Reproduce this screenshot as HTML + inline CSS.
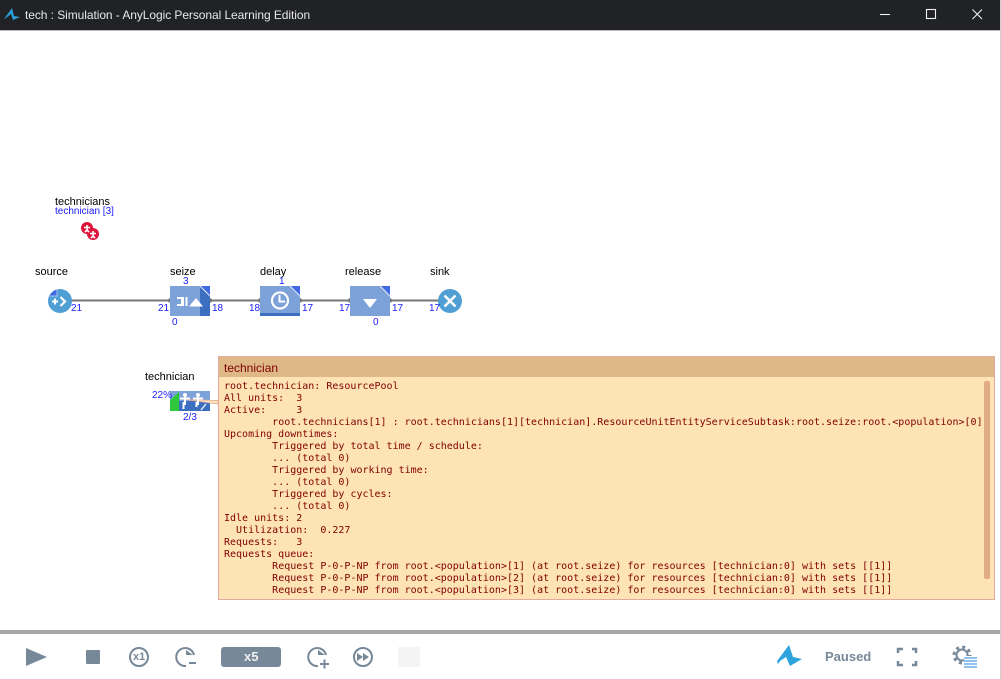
<!DOCTYPE html>
<html><head><meta charset="utf-8">
<style>
html,body{margin:0;padding:0;width:1001px;height:679px;overflow:hidden;background:#fff}
.t{position:absolute;font:10px/12px "Liberation Sans",sans-serif;white-space:pre}
.k{color:#000;font-size:11px}
.b{color:#1a1aff}
#title{position:absolute;left:0;top:0;width:1001px;height:30px;background:#202225;border-bottom:1px solid #bbb}
#tt{position:absolute;left:25px;top:7px;color:#e8e8e8;font:12px/16px "Liberation Sans",sans-serif;letter-spacing:-.07px;white-space:pre}
#pop{position:absolute;left:218px;top:356px;width:775px;height:242px;background:#fee3b5;border:1px solid #e2aaa0}
#ph{position:absolute;left:0;top:0;width:775px;height:20px;background:#deb887;color:#800000;font:12px/22px "Liberation Sans",sans-serif;padding-left:5px;box-sizing:border-box}
#pt{position:absolute;left:5px;top:24px;margin:0;color:#800000;font:10px/12px "DejaVu Sans Mono","Liberation Mono",monospace;white-space:pre;tab-size:8}
#sb{position:absolute;left:765px;top:24px;width:6px;height:198px;background:#e0ab86;border-radius:2px}
#bar{position:absolute;left:0;top:630px;width:1001px;height:4px;background:#a6a6a6}
#edge{position:absolute;left:1000px;top:0;width:1px;height:679px;background:#d0d0d0}
</style></head>
<body>
<div id="title">
<svg style="position:absolute;left:0;top:0" width="26" height="30"><path d="M4 19L12 8L14 16L20 17L13 20L11 14L6 18Z" fill="#2b9fd8"/></svg>
<div id="tt">tech : Simulation - AnyLogic Personal Learning Edition</div>
<svg style="position:absolute;left:870px;top:0" width="131" height="30" fill="none" stroke="#f0f0f0" stroke-width="1.1"><path d="M10 14.5H20"/><rect x="56.5" y="9.500" width="9" height="9"/><path d="M102.500 9.500L112 19M112 9.500L102.500 19"/></svg>
</div>

<svg style="position:absolute;left:0;top:0" width="1001" height="679">
<g stroke="#777" stroke-width="2"><path d="M70 300.5H170M210 300.5H260M300 300.5H350M390 300.5H440"/></g>
<g fill="#777"><circle cx="70" cy="300.5" r="2.2"/><circle cx="170" cy="300.5" r="2.2"/><circle cx="210" cy="300.5" r="2.2"/><circle cx="260" cy="300.5" r="2.2"/><circle cx="300" cy="300.5" r="2.2"/><circle cx="350" cy="300.5" r="2.2"/><circle cx="390" cy="300.5" r="2.2"/><circle cx="440" cy="300.5" r="2.2"/></g>
<g><circle cx="87" cy="228" r="6" fill="#dc143c"/><circle cx="93" cy="234" r="6" fill="#dc143c"/>
<g stroke="#fff" stroke-width="1.6" fill="none"><path d="M84 227.500H90M87 225V230M85 232L87 230L89 232"/><path d="M90 233.500H96M93 231V236M91 238L93 236L95 238"/></g></g>
<circle cx="60" cy="301" r="12" fill="#4f9fd5"/>
<path d="M57 289.500V296H49.500A12 12 0 0 1 57 289.500Z" fill="#4169e1"/>
<path d="M57 289.500V296H49.500" fill="none" stroke="#a8c4ee" stroke-width="1"/>
<g stroke="#fff" fill="none" stroke-width="2"><path d="M52 301.500H58M55 298.500V304.500"/><path d="M60.500 297L65 301.500L60.500 306" stroke-width="2.200"/></g>
<rect x="170" y="286" width="40" height="30" fill="#7da1d9"/>
<rect x="200" y="286" width="10" height="30" fill="#3c6fbf"/>
<path d="M200 286H210V296Z" fill="#4169e1"/><path d="M200 286L210 296" stroke="#e8effa" stroke-width="1"/>
<path d="M177 297H184V306H177V304H181V299H177ZM185.500 297H187.500V306H185.500Z" fill="#fff"/>
<path d="M189 306.500L196 298L203 306.500Z" fill="#fff"/>
<rect x="260" y="286" width="40" height="30" fill="#7da1d9"/>
<rect x="260" y="313" width="40" height="3" fill="#3c6fbf"/>
<path d="M290 286H300V296Z" fill="#4169e1"/><path d="M290 286L300 296" stroke="#e8effa" stroke-width="1"/>
<circle cx="280" cy="300.500" r="8" fill="none" stroke="#fff" stroke-width="2.200"/>
<path d="M279.500 295V301.500H285" fill="none" stroke="#fff" stroke-width="2"/>
<rect x="350" y="286" width="40" height="30" fill="#7da1d9"/>
<path d="M380 286H390V296Z" fill="#4169e1"/><path d="M380 286L390 296" stroke="#e8effa" stroke-width="1"/>
<path d="M363 299H377L370 308Z" fill="#fff"/>
<circle cx="450" cy="301" r="12" fill="#4f9fd5"/>
<path d="M444.500 295.500L455.500 306.500M455.500 295.500L444.500 306.500" stroke="#fff" stroke-width="2.500"/>
<rect x="170" y="391" width="40" height="20" fill="#7da1d9"/>
<rect x="179" y="401" width="31" height="10" fill="#3c6fbf"/>
<path d="M170 411V400L179 392V411Z" fill="#2ec83c"/>
<path d="M185 399.500L218 404V400.500Z" fill="#fee3b5" stroke="#e2aaa0" stroke-width=".8"/>
<g stroke="#fff" fill="none" stroke-width="2"><circle cx="185" cy="395" r="2" fill="#fff" stroke="none"/><circle cx="198" cy="395" r="2" fill="#fff" stroke="none"/><path d="M180 398.500H190M185 397V405M183.500 409V402M193 398.500H203M198 397V405M196.500 407V402"/><path d="M201 410L206 404" stroke-width="1.200"/></g>
</svg>

<div class="t k" style="left:55px;top:196px">technicians</div>
<div class="t b" style="left:55px;top:206px">technician [3]</div>
<div class="t k" style="left:35px;top:266px">source</div>
<div class="t k" style="left:170px;top:266px">seize</div>
<div class="t k" style="left:260px;top:266px">delay</div>
<div class="t k" style="left:345px;top:266px">release</div>
<div class="t k" style="left:430px;top:266px">sink</div>
<div class="t k" style="left:145px;top:371px">technician</div>

<div class="t b" style="left:71px;top:303px">21</div>
<div class="t b" style="left:158px;top:303px">21</div>
<div class="t b" style="left:212px;top:303px">18</div>
<div class="t b" style="left:249px;top:303px">18</div>
<div class="t b" style="left:302px;top:303px">17</div>
<div class="t b" style="left:339px;top:303px">17</div>
<div class="t b" style="left:392px;top:303px">17</div>
<div class="t b" style="left:429px;top:303px">17</div>
<div class="t b" style="left:183px;top:276px">3</div>
<div class="t b" style="left:279px;top:276px">1</div>
<div class="t b" style="left:172px;top:317px">0</div>
<div class="t b" style="left:373px;top:317px">0</div>
<div class="t b" style="left:152px;top:390px">22%</div>
<div class="t b" style="left:183px;top:412px">2/3</div>

<div id="pop">
<div id="ph">technician</div>
<pre id="pt">root.technician: ResourcePool
All units:  3
Active:     3
	root.technicians[1] : root.technicians[1][technician].ResourceUnitEntityServiceSubtask:root.seize:root.&lt;population&gt;[0]
Upcoming downtimes:
	Triggered by total time / schedule:
	... (total 0)
	Triggered by working time:
	... (total 0)
	Triggered by cycles:
	... (total 0)
Idle units: 2
  Utilization:  0.227
Requests:   3
Requests queue:
	Request P-0-P-NP from root.&lt;population&gt;[1] (at root.seize) for resources [technician:0] with sets [[1]]
	Request P-0-P-NP from root.&lt;population&gt;[2] (at root.seize) for resources [technician:0] with sets [[1]]
	Request P-0-P-NP from root.&lt;population&gt;[3] (at root.seize) for resources [technician:0] with sets [[1]]</pre>
<div id="sb"></div>
</div>

<div id="bar"></div>
<svg style="position:absolute;left:0;top:634px" width="1001" height="45">
<g fill="#778899" stroke="none">
<path d="M26 14L47 23L26 32Z"/>
<rect x="86" y="16" width="14" height="14" rx="1"/>
<rect x="221" y="13" width="60" height="20" rx="3"/>
<rect x="398" y="13" width="22" height="20" fill="#f4f4f4"/>
</g>
<g fill="none" stroke="#778899" stroke-width="2">
<circle cx="139" cy="23" r="9"/>
<path d="M194 21A9 9 0 1 0 186 32"/>
<path d="M326 21A9 9 0 1 0 318 32"/>
<circle cx="363" cy="23" r="9"/>
<path d="M898 19V15H903M912 15H916V19M916 27V31H912M903 31H898V27" stroke-width="2.500"/>
<circle cx="962" cy="21" r="5.500" stroke-width="2"/>
<circle cx="962" cy="21" r="8" stroke-width="3" stroke-dasharray="3 3.280"/>
</g>
<g fill="#778899">
<path d="M186 16L193 21L186 21Z"/>
<path d="M189 28H196V30H189Z"/>
<path d="M318 16L325 21L318 21Z"/>
<path d="M320 29H329V31H320ZM323.500 25.500H325.500V34.500H323.500Z"/>
<path d="M357 19L363 23L357 27ZM363 19L369 23L363 27Z"/>
</g>
<rect x="964" y="22" width="14" height="12" fill="#fff"/>
<g fill="#8fc0f0"><rect x="964" y="23" width="13" height="2"/><rect x="964" y="26" width="13" height="2"/><rect x="964" y="29" width="13" height="2"/><rect x="964" y="32" width="13" height="2"/></g>
<path d="M777 27L789 11L793 23L802 25L790 32L786 23L780 27L778 30Z" fill="#2ea3de"/>
</svg>
<div class="t" style="left:133px;top:650px;color:#778899;font:bold 11px/14px 'Liberation Sans',sans-serif">x1</div>
<div class="t" style="left:244px;top:650px;color:#f0f0f0;font:bold 13px/14px 'Liberation Sans',sans-serif">x5</div>
<div class="t" style="left:825px;top:649px;color:#778899;font:bold 13px/15px 'Liberation Sans',sans-serif">Paused</div>
<div id="edge"></div>
</body></html>
